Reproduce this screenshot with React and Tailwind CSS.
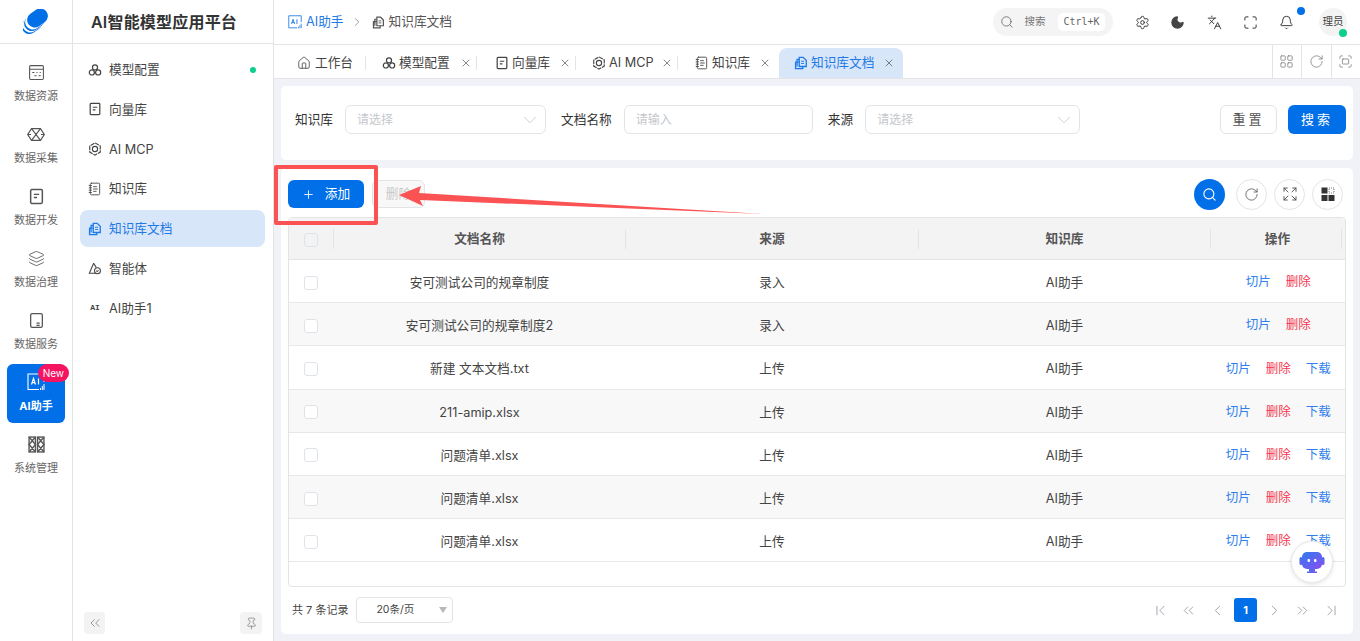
import {
  Bell, ChevronDown, ChevronFirst, ChevronLast, ChevronLeft, ChevronRight, ChevronsLeft, ChevronsRight, Expand,
  Fullscreen, Home, Languages, LayoutGrid, Layers, Maximize, Moon, NotebookText, Pin, Plus,
  RotateCw, Search, Settings, X,
} from "lucide-react";

const FONT = "font-['Inter','Noto_Sans_CJK_SC',sans-serif]";

function Trio({ className = "" }) {
  return (
    <svg viewBox="0 0 16 16" fill="none" stroke="currentColor" strokeWidth="1.4" className={className}>
      <circle cx="8" cy="5" r="2.9" />
      <circle cx="4.4" cy="10.800" r="2.9" />
      <circle cx="11.600" cy="10.800" r="2.9" />
    </svg>
  );
}

function DocBox({ className = "" }) {
  return (
    <svg viewBox="0 0 16 16" fill="none" stroke="currentColor" strokeWidth="1.4" className={className}>
      <rect x="2.500" y="1.500" width="11" height="13" rx="1" />
      <path d="M5.500 6h5M5.500 9h3" />
    </svg>
  );
}

function McpIcon({ className = "" }) {
  return (
    <svg viewBox="0 0 16 16" fill="none" stroke="currentColor" strokeWidth="1.3" className={className}>
      <path d="M8 1l6 3.500v7L8 15l-6-3.500v-7z" strokeDasharray="5 1" />
      <circle cx="8" cy="8" r="3" />
    </svg>
  );
}

function AgentIcon({ className = "" }) {
  return (
    <svg viewBox="0 0 16 16" fill="none" stroke="currentColor" strokeWidth="1.2" className={className}>
      <path d="M6.500 2L1.500 13.500h7M6.500 2l3 5" />
      <circle cx="10.800" cy="10.500" r="3.400" />
      <path d="M9.500 10.500l1 1 1.500-1.500" />
    </svg>
  );
}

function DocsIcon({ className = "" }) {
  return (
    <svg viewBox="0 0 16 16" fill="none" stroke="currentColor" strokeWidth="1.5" className={className}>
      <path d="M6 1.500h4.500L14 5v7H6z" />
      <path d="M6 4H3.500v8" />
      <path d="M6 7H1.800v7.500H10V12" />
      <path d="M8 6h3.500M8 8.500h3.500" strokeWidth="1.100" />
    </svg>
  );
}

function AiText({ className = "" }) {
  return <span className={`font-['Liberation_Mono',monospace] text-[8px] font-bold leading-none ${className}`}>AI</span>;
}

function AiBox({ className = "" }) {
  return (
    <svg viewBox="0 0 18 18" fill="none" stroke="currentColor" className={className}>
      <path d="M12 16.500H1V1h16v8" strokeWidth="1.100" />
      <path d="M4.500 11.500l2-6 2 6M5.200 9.700h2.600M11.500 5.500v6" strokeWidth="1.200" />
      <path d="M13.500 17v-2M15.300 17v-4M17 17v-6" strokeWidth="1" />
    </svg>
  );
}

function Logo() {
  const layers = [
    { x: 9, y: 15.500, fill: "#0070e8" },
    { x: 10, y: 14, fill: "#fff" },
    { x: 11.500, y: 12.500, fill: "#0070e8" },
    { x: 12.500, y: 11, fill: "#fff" },
    { x: 14.500, y: 9, fill: "#0070e8" },
  ];
  return (
    <svg viewBox="0 0 26 26" className="h-[26px] w-[26px]">
      {layers.map((l, i) => (
        <rect key={i} x="-11" y="-7.500" width="22" height="15" rx="7.500" fill={l.fill} transform={`translate(${l.x} ${l.y}) rotate(-35)`} />
      ))}
    </svg>
  );
}

function RailIcon({ name }) {
  const cls = "h-[17px] w-[17px]";
  if (name === "数据资源") {
    return (
      <svg viewBox="0 0 16 16" fill="none" stroke="currentColor" strokeWidth="1" className={cls}>
        <rect x="1.500" y="1.500" width="13" height="13" rx="1" />
        <path d="M1.500 5h13M4 8h2M8 8h1M11 8h1M6 11h2M10 11h2" />
      </svg>
    );
  }
  if (name === "数据采集") {
    return (
      <svg viewBox="0 -2 18 17" fill="none" stroke="currentColor" strokeWidth="1.200" className="h-[17px] w-[18px]">
        <path d="M4.500.7h9l3.800 5.800-3.800 5.800h-9L.7 6.500z" />
        <path d="M4.500.7L9 6.500l-4.500 5.800M13.500.7L9 6.500l4.500 5.800M.7 6.500h3.300M14 6.500h3.300" />
      </svg>
    );
  }
  if (name === "数据开发") return <DocBox className={cls} />;
  if (name === "数据治理") return <Layers className={cls} strokeWidth={1.2} />;
  if (name === "数据服务") {
    return (
      <svg viewBox="0 0 16 16" fill="none" stroke="currentColor" strokeWidth="1.200" className={cls}>
        <rect x="2.500" y="1.500" width="11" height="13" rx="1.500" />
        <path d="M8 10.500h3M8 12.500h3" />
      </svg>
    );
  }
  if (name === "系统管理") {
    return (
      <svg viewBox="0 0 16 16" fill="none" stroke="currentColor" strokeWidth="1.300" className={cls}>
        <rect x="1" y="1" width="6" height="14" />
        <rect x="9" y="1" width="6" height="14" />
        <path d="M1 1l6 7-6 7M7 1L1 8l6 7M9 1l6 7-6 7M15 1L9 8l6 7" />
      </svg>
    );
  }
  return null;
}

const railItems = ["数据资源", "数据采集", "数据开发", "数据治理", "数据服务"];

const menuItems = [
  { label: "模型配置", icon: <Trio className="h-[14px] w-[14px]" />, dot: true },
  { label: "向量库", icon: <DocBox className="h-[14px] w-[14px]" /> },
  { label: "AI MCP", icon: <McpIcon className="h-[14px] w-[14px]" /> },
  { label: "知识库", icon: <NotebookText className="h-[14px] w-[14px]" strokeWidth={1.5} /> },
  { label: "知识库文档", icon: <DocsIcon className="h-[14px] w-[14px]" />, active: true },
  { label: "智能体", icon: <AgentIcon className="h-[15px] w-[15px]" /> },
  { label: "AI助手1", icon: <AiText className="w-[14px] text-center" /> },
];

const tabs = [
  { label: "模型配置", icon: <Trio className="h-[14px] w-[14px]" />, box: "w-[111px] pl-[16px]", divider: true },
  { label: "向量库", icon: <DocBox className="h-[14px] w-[14px]" />, box: "w-[99px] pl-[18px]", divider: true },
  { label: "AI MCP", icon: <McpIcon className="h-[14px] w-[14px]" />, box: "w-[102px] pl-[16px]", divider: true },
  { label: "知识库", icon: <NotebookText className="h-[14px] w-[14px]" strokeWidth={1.5} />, box: "w-[101px] pl-[17px] pr-[8px]" },
];

const rows = [
  { name: "安可测试公司的规章制度", from: "录入" },
  { name: "安可测试公司的规章制度2", from: "录入" },
  { name: "新建 文本文档.txt", from: "上传", dl: true },
  { name: "211-amip.xlsx", from: "上传", dl: true },
  { name: "问题清单.xlsx", from: "上传", dl: true },
  { name: "问题清单.xlsx", from: "上传", dl: true },
  { name: "问题清单.xlsx", from: "上传", dl: true },
];

function Checkbox({ className = "" }) {
  return <span className={`block h-[14px] w-[14px] rounded-[3px] border border-[#dfe3e8] ${className}`} />;
}

function Field({ label, placeholder, w, arrow }) {
  return (
    <div className="flex items-center gap-[12px]">
      <span className="text-[12.700px] text-[#333]">{label}</span>
      <div className={`flex h-[29px] items-center justify-between rounded-[6px] border border-[#e3e4e8] pl-[11px] pr-[4px] ${w}`}>
        <span className="pt-[1px] text-[12px] text-[#c5c7cc]">{placeholder}</span>
        {arrow && <ChevronDown className="h-[22px] w-[22px] text-[#c5c7cc]" strokeWidth={0.9} />}
      </div>
    </div>
  );
}

function RoundBtn({ children, active, className = "" }) {
  return (
    <button className={`flex h-[31px] w-[31px] items-center justify-center rounded-full ${active ? "bg-[#006fe8] text-white" : "border border-[#e3e4e8] bg-white text-[#444]"} ${className}`}>
      {children}
    </button>
  );
}

export default function App() {
  return (
    <div className={`relative flex h-[641px] w-[1360px] overflow-hidden bg-[#f0f2f7] text-[#333] ${FONT}`}>
      {/* Left rail */}
      <aside className="flex w-[73px] shrink-0 flex-col items-center border-r border-[#e3e4e6] bg-white">
        <div className="flex h-[44px] w-full shrink-0 items-center justify-center border-b border-[#e3e4e6]">
          <Logo />
        </div>
        <div className="flex w-full flex-col items-center pt-[20px]">
          {railItems.map((name) => (
            <div key={name} className="mb-[22px] flex h-[40px] flex-col items-center justify-between text-[#555]">
              <RailIcon name={name} />
              <span className="text-[11px] leading-[16px] text-[#666]">{name}</span>
            </div>
          ))}
          <div className="relative -mt-[10px] flex h-[59px] w-[58px] flex-col items-center justify-between rounded-[6px] bg-[#006fe8] pb-[9px] pt-[9px] text-white">
            <AiBox className="h-[18px] w-[18px]" />
            <span className="text-[11px] font-bold leading-[16px]">AI助手</span>
            <span className="absolute -right-[4px] top-0 rounded-full bg-[#f5145f] px-[5px] text-[10px] leading-[18px] text-white">New</span>
          </div>
          <div className="mt-[13px] flex h-[40px] flex-col items-center justify-between text-[#555]">
            <RailIcon name="系统管理" />
            <span className="text-[11px] leading-[16px] text-[#666]">系统管理</span>
          </div>
        </div>
      </aside>

      {/* Second menu */}
      <aside className="flex w-[201px] shrink-0 flex-col border-r border-[#e3e4e6] bg-white">
        <div className="flex h-[44px] shrink-0 items-center border-b border-[#e3e4e6] pl-[18px] text-[16px] font-semibold tracking-[0.200px] text-[#333]">
          AI智能模型应用平台
        </div>
        <nav className="flex flex-col gap-[2.800px] pl-[7px] pr-[8px] pt-[7px]">
          {menuItems.map((item) => (
            <div
              key={item.label}
              className={`flex h-[37px] items-center gap-[7px] rounded-[8px] px-[8px] text-[12.700px] ${item.active ? "bg-[#d7e6f9] text-[#1f7ae6]" : "text-[#444]"}`}
            >
              <span className="flex w-[14px] justify-center">{item.icon}</span>
              <span>{item.label}</span>
              {item.dot && <span className="ml-auto mr-[1px] h-[6px] w-[6px] rounded-full bg-[#0bd08b]" />}
            </div>
          ))}
        </nav>
        <div className="mt-auto flex justify-between pb-[7px] pl-[11px] pr-[11px]">
          <span className="flex h-[22px] w-[21px] items-center justify-center rounded-[4px] bg-[#f3f3f4] text-[#777]">
            <ChevronsLeft className="h-[16px] w-[16px]" strokeWidth={1.100} />
          </span>
          <span className="flex h-[22px] w-[22px] items-center justify-center rounded-[4px] bg-[#f3f3f4] text-[#777]">
            <Pin className="h-[13px] w-[13px]" strokeWidth={1.300} />
          </span>
        </div>
      </aside>

      {/* Main */}
      <main className="flex min-w-0 flex-1 flex-col">
        <header className="flex h-[45px] shrink-0 items-center border-b border-[#e3e4e6] bg-white pl-[14px] pr-[13px]">
          <AiBox className="h-[14px] w-[14px] text-[#1f7ae6]" />
          <span className="ml-[4px] text-[12.700px] text-[#1f7ae6]">AI助手</span>
          <ChevronRight className="ml-[6px] h-[14px] w-[14px] text-[#777]" strokeWidth={1.200} />
          <DocsIcon className="ml-[8px] h-[13px] w-[13px] text-[#555]" />
          <span className="ml-[4px] text-[12.700px] text-[#555]">知识库文档</span>

          <div className="ml-auto flex h-[28px] w-[120px] items-center rounded-full bg-[#f4f4f5] pl-[7px] pr-[8px]">
            <Search className="h-[14px] w-[14px] text-[#666]" strokeWidth={1.400} />
            <span className="ml-[11px] text-[10.500px] text-[#777]">搜索</span>
            <span className="ml-auto rounded-[5px] bg-white px-[5px] font-['DejaVu_Sans_Mono',monospace] text-[10px] leading-[18px] text-[#666]">Ctrl+K</span>
          </div>
          <Settings className="ml-[22px] h-[15px] w-[15px] text-[#333]" strokeWidth={1.500} />
          <Moon className="ml-[20px] h-[15px] w-[15px] fill-[#444] text-[#444]" />
          <Languages className="ml-[22px] h-[15px] w-[15px] text-[#333]" strokeWidth={1.500} />
          <Maximize className="ml-[21px] h-[15px] w-[15px] text-[#333]" strokeWidth={1.600} />
          <span className="relative ml-[21px] flex">
            <Bell className="h-[15px] w-[15px] text-[#333]" strokeWidth={1.500} />
            <span className="absolute -right-[11px] -top-[8px] h-[8px] w-[8px] rounded-full bg-[#006fe8]" />
          </span>
          <span className="relative ml-[25.500px] flex h-[28px] w-[28px] items-center justify-center rounded-full bg-[#f3f3f4] text-[10.500px] text-[#444]">
            理员
            <span className="absolute -bottom-[1px] right-0 h-[8px] w-[8px] rounded-full bg-[#0bd08b]" />
          </span>
        </header>

        <div className="flex h-[34px] shrink-0 items-stretch border-b border-[#e3e4e6] bg-white">
          <div className="flex flex-1 items-stretch pl-[8px] pt-[3px]">
            <div className="flex w-[84px] items-center pl-[15px] text-[12.700px] text-[#444]">
              <Home className="h-[14px] w-[14px]" strokeWidth={1.400} />
              <span className="ml-[4px]">工作台</span>
              <span className="ml-auto h-[14px] w-px bg-[#e3e4e6]" />
            </div>
            {tabs.map((tab) => (
              <div key={tab.label} className={`flex items-center whitespace-nowrap text-[12.700px] text-[#444] ${tab.box}`}>
                <span className="mr-[3px] flex shrink-0">{tab.icon}</span>
                {tab.label}
                <X className="ml-auto h-[12px] w-[12px] shrink-0" strokeWidth={1.300} />
                {tab.divider && <span className="ml-[4px] h-[14px] w-px shrink-0 bg-[#e3e4e6]" />}
              </div>
            ))}
            <div className="flex w-[124px] items-center whitespace-nowrap rounded-t-[8px] bg-[#d7e6f9] pl-[15px] pr-[8px] text-[12.700px] text-[#1f7ae6]">
              <DocsIcon className="mr-[3px] h-[14px] w-[14px] shrink-0" />
              知识库文档
              <X className="ml-auto h-[12px] w-[12px] shrink-0 text-[#444]" strokeWidth={1.300} />
            </div>
          </div>
          <div className="flex">
            {[LayoutGrid, RotateCw, Fullscreen].map((Icon, i) => (
              <span key={i} className="flex w-[29.500px] items-center justify-center border-l border-[#e3e4e6] text-[#777]">
                <Icon className="h-[15px] w-[15px]" strokeWidth={1.200} />
              </span>
            ))}
          </div>
        </div>

        <div className="flex min-h-0 flex-1 flex-col gap-[8px] px-[7px] pb-[7px] pt-[7px]">
          {/* Filters */}
          <section className="flex h-[74px] shrink-0 items-center rounded-[5px] bg-white pb-[7px] pl-[14px] pr-[7px]">
            <div className="flex items-center gap-[15px]">
              <Field label="知识库" placeholder="请选择" w="w-[201px]" arrow />
              <Field label="文档名称" placeholder="请输入" w="w-[189px]" />
              <Field label="来源" placeholder="请选择" w="w-[215px]" arrow />
            </div>
            <div className="ml-auto flex gap-[11px]">
              <button className="h-[29px] w-[57px] rounded-[6px] border border-[#e3e4e8] text-[13px] tracking-[3px] text-[#555]">重置</button>
              <button className="h-[29px] w-[58px] rounded-[6px] bg-[#006fe8] text-[13px] tracking-[3px] text-white">搜索</button>
            </div>
          </section>

          {/* Table card */}
          <section className="flex min-h-0 flex-1 flex-col rounded-[5px] bg-white px-[7px]">
            <div className="flex h-[49px] shrink-0 items-center pt-[3px]">
              <button className="flex h-[28px] w-[76px] items-center justify-center gap-[10px] rounded-[6px] bg-[#006fe8] text-[12.700px] text-white">
                <Plus className="h-[13px] w-[13px]" strokeWidth={1.600} />
                添加
              </button>
              <button className="ml-[8px] h-[28px] w-[53px] rounded-[6px] border border-[#e3e4e8] bg-[#f8f8f8] text-[12.700px] text-[#c8c8c8]">删除</button>
              <div className="ml-auto mr-[3px] flex">
                <RoundBtn active><Search className="h-[15px] w-[15px]" strokeWidth={1.800} /></RoundBtn>
                <RoundBtn className="ml-[11px]"><RotateCw className="h-[15px] w-[15px]" strokeWidth={1.200} /></RoundBtn>
                <RoundBtn className="ml-[7px]"><Expand className="h-[16px] w-[16px]" strokeWidth={1.300} /></RoundBtn>
                <RoundBtn className="ml-[7px]">
                  <svg viewBox="0 0 14 14" className="h-[14px] w-[14px]" fill="#333">
                    <rect x="0.500" y="0.500" width="6" height="6" />
                    <rect x="8" y="1" width="5" height="5" fill="none" stroke="#555" strokeWidth="0.800" strokeDasharray="1 1" />
                    <rect x="0.500" y="8" width="6" height="6" />
                    <rect x="7.500" y="8" width="6" height="6" />
                  </svg>
                </RoundBtn>
              </div>
            </div>

            <div className="flex h-[370px] shrink-0 flex-col overflow-hidden rounded-[4px] border border-[#e3e4e6]">
              <div className="grid h-[42px] shrink-0 grid-cols-[45px_292px_293px_292px_1fr] items-center border-b border-[#e3e4e6] bg-[#f3f3f4] pr-[3px] text-[12.700px] font-semibold text-[#555]">
                <div className="flex h-[20px] items-center justify-center border-r border-[#e3e4e6]"><Checkbox className="mt-[3px]" /></div>
                <div className="flex h-[20px] items-center justify-center border-r border-[#e3e4e6]">文档名称</div>
                <div className="flex h-[20px] items-center justify-center border-r border-[#e3e4e6]">来源</div>
                <div className="flex h-[20px] items-center justify-center border-r border-[#e3e4e6]">知识库</div>
                <div className="flex h-[20px] items-center justify-center border-r border-[#e3e4e6] pl-[3px]">操作</div>
              </div>
              {rows.map((row, i) => (
                <div
                  key={i}
                  className={`grid h-[43.200px] shrink-0 grid-cols-[44.500px_292px_293px_292px_1fr] items-center border-b border-[#e8e8ea] pt-[3px] text-[12.700px] text-[#444] ${i % 2 === 1 ? "bg-[#f8f8f8]" : "bg-white"}`}
                >
                  <div className="flex justify-center"><Checkbox className="bg-white" /></div>
                  <div className="text-center">{row.name}</div>
                  <div className="text-center">{row.from}</div>
                  <div className="text-center">AI助手</div>
                  <div className="flex justify-center gap-[15px] pl-[1px] text-[12.500px]">
                    <span className="text-[#2f80ed]">切片</span>
                    <span className="text-[#f5364f]">删除</span>
                    {row.dl && <span className="text-[#2f80ed]">下载</span>}
                  </div>
                </div>
              ))}
            </div>

            <div className="flex flex-1 items-center pb-[1px]">
              <span className="ml-[4px] text-[11px] text-[#444]">共 7 条记录</span>
              <div className="relative ml-[8px] flex h-[26px] w-[97px] items-center rounded-[4px] border border-[#e3e4e6] pl-[19px] text-[10.500px] text-[#444]">
                20条/页
                <span className="absolute right-[5px] top-[9px] h-0 w-0 border-x-[4.500px] border-t-[6px] border-x-transparent border-t-[#b5b8bd]" />
              </div>
              <div className="ml-auto mr-[1px] flex items-center text-[#8a9099]">
                <span className="flex w-[28px] justify-center"><ChevronFirst className="h-[17px] w-[17px]" strokeWidth={1.100} /></span>
                <span className="flex w-[29px] justify-center"><ChevronsLeft className="h-[17px] w-[17px]" strokeWidth={1.100} /></span>
                <span className="flex w-[28px] justify-center"><ChevronLeft className="h-[17px] w-[17px]" strokeWidth={1.100} /></span>
                <span className="mx-[3px] flex h-[24px] w-[23px] items-center justify-center rounded-[3px] bg-[#006fe8] text-[11px] font-bold text-white">1</span>
                <span className="flex w-[28px] justify-center"><ChevronRight className="h-[17px] w-[17px]" strokeWidth={1.100} /></span>
                <span className="flex w-[29px] justify-center"><ChevronsRight className="h-[17px] w-[17px]" strokeWidth={1.100} /></span>
                <span className="flex w-[28px] justify-center"><ChevronLast className="h-[17px] w-[17px]" strokeWidth={1.100} /></span>
              </div>
            </div>
          </section>
        </div>
      </main>

      {/* Chat bubble floating over the table */}
      <div className="absolute left-[1291px] top-[541px] flex h-[42px] w-[42px] items-center justify-center rounded-full border border-[#e8e8ea] bg-white shadow-[0_1px_4px_rgba(0,0,0,0.12)]">
        <svg viewBox="0 0 26 24" className="h-[24px] w-[26px]">
          <defs>
            <linearGradient id="botGrad" x1="0" y1="0" x2="1" y2="1">
              <stop offset="0" stopColor="#2f7bf0" />
              <stop offset="1" stopColor="#8a4df0" />
            </linearGradient>
          </defs>
          <rect x="0.500" y="7" width="3" height="8" rx="1.500" fill="url(#botGrad)" />
          <rect x="22.500" y="7" width="3" height="8" rx="1.500" fill="url(#botGrad)" />
          <rect x="3" y="2" width="20" height="17" rx="5" fill="url(#botGrad)" />
          <path d="M10 19h6v2.500h2V23H8v-1.500h2z" fill="url(#botGrad)" />
          <rect x="8.500" y="9" width="2.500" height="3" rx="1" fill="#fff" />
          <rect x="15" y="9" width="2.500" height="3" rx="1" fill="#fff" />
        </svg>
      </div>

      {/* Red annotation drawn on top of the screenshot */}
      <div className="pointer-events-none absolute left-[274px] top-[165px] h-[60px] w-[104px] rounded-[2px] border-[4px] border-[#fb5353]" />
      <svg className="pointer-events-none absolute left-[390px] top-[175px] h-[45px] w-[380px]" viewBox="0 0 380 45">
        <path d="M9 20L31 11L29 18L373 39L30 25L33 31Z" fill="#fb5353" />
      </svg>
    </div>
  );
}
